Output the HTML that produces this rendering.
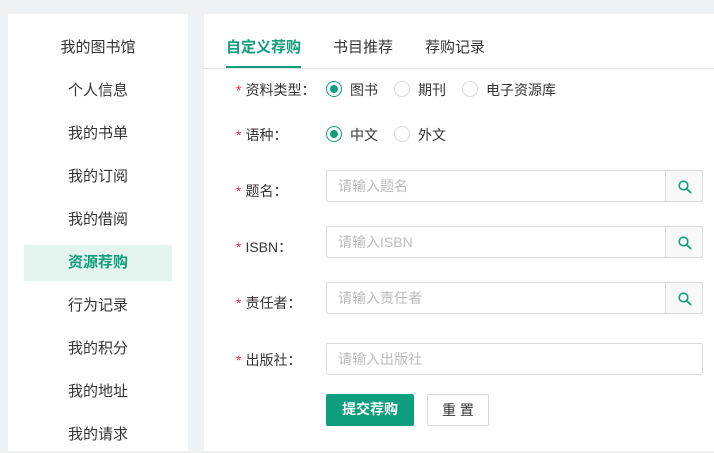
<!DOCTYPE html>
<html><head><meta charset="utf-8"><style>
*{margin:0;padding:0;box-sizing:border-box}
body{width:714px;height:451px;background:#eef1f4;font-family:"Liberation Sans","Noto Sans CJK SC",sans-serif;font-size:14px;color:#333;position:relative;overflow:hidden}
.side{position:absolute;left:8px;top:14px;width:180px;height:437px;background:#fff}
.mi{position:absolute;left:16px;width:148px;height:36px;line-height:36px;text-align:center;font-size:15px;color:#333}
.mi.act{background:#e3f4ef;color:#0f9d7a;font-weight:bold}
.main{position:absolute;left:204px;top:14px;width:510px;height:437px;background:#fff}
.tab{position:absolute;top:22px;font-size:15px;color:#333}
.tab.act{color:#0f9d7a;font-weight:bold}
.line{position:absolute;left:0;top:54px;width:510px;height:1px;background:#e4e4e4}
.ul{position:absolute;left:22px;top:52px;width:75px;height:2px;background:#0f9d7a}
.lbl{position:absolute;left:32px;font-size:14px;color:#333}
.lbl b{color:#e33;font-weight:normal;margin-right:4px}
.radio{position:absolute;width:16px;height:16px;border:1px solid #d9d9d9;border-radius:50%}
.radio.on{border-color:#0f9d7a}
.radio.on:after{content:"";position:absolute;left:3px;top:3px;width:8px;height:8px;border-radius:50%;background:#0f9d7a}
.rt{position:absolute;font-size:14px;color:#333}
.inp{position:absolute;left:122px;width:377px;height:32px;border:1px solid #dcdcdc;border-radius:2px;color:#bbb;font-size:14px;line-height:30px;padding-left:11px}
.sb{position:absolute;right:-1px;top:-1px;width:38px;height:32px;border:1px solid #dcdcdc;background:#f8f8f8;border-radius:0 2px 2px 0}
.sb svg{position:absolute;left:12px;top:9px}
.btn{position:absolute;top:380px;height:32px;line-height:30px;text-align:center;font-size:14px;border-radius:2px}
</style></head><body>
<div class="side">
<div class="mi" style="top:16px">我的图书馆</div>
<div class="mi" style="top:59px">个人信息</div>
<div class="mi" style="top:102px">我的书单</div>
<div class="mi" style="top:145px">我的订阅</div>
<div class="mi" style="top:188px">我的借阅</div>
<div class="mi act" style="top:231px">资源荐购</div>
<div class="mi" style="top:274px">行为记录</div>
<div class="mi" style="top:317px">我的积分</div>
<div class="mi" style="top:360px">我的地址</div>
<div class="mi" style="top:403px">我的请求</div>
</div>
<div class="main">
<div class="tab act" style="left:22px">自定义荐购</div>
<div class="tab" style="left:129px">书目推荐</div>
<div class="tab" style="left:221px">荐购记录</div>
<div class="line"></div><div class="ul"></div>
<div class="lbl" style="top:66px"><b>*</b>资料类型：</div>
<div class="radio on" style="left:122px;top:67px"></div><div class="rt" style="left:146px;top:66px">图书</div>
<div class="radio" style="left:190px;top:67px"></div><div class="rt" style="left:214px;top:66px">期刊</div>
<div class="radio" style="left:258px;top:67px"></div><div class="rt" style="left:282px;top:66px">电子资源库</div>
<div class="lbl" style="top:111px"><b>*</b>语种：</div>
<div class="radio on" style="left:122px;top:112px"></div><div class="rt" style="left:146px;top:111px">中文</div>
<div class="radio" style="left:190px;top:112px"></div><div class="rt" style="left:214px;top:111px">外文</div>
<div class="lbl" style="top:167px"><b>*</b>题名：</div>
<div class="inp" style="top:156px">请输入题名<div class="sb"><svg width="14" height="14" viewBox="0 0 14 14"><circle cx="5.5" cy="5.5" r="4.3" fill="none" stroke="#0f9d7a" stroke-width="1.6"/><path d="M8.6 8.6L12.5 12.5" stroke="#0f9d7a" stroke-width="1.8" stroke-linecap="round"/></svg></div></div>
<div class="lbl" style="top:223px"><b>*</b>ISBN：</div>
<div class="inp" style="top:212px">请输入ISBN<div class="sb"><svg width="14" height="14" viewBox="0 0 14 14"><circle cx="5.5" cy="5.5" r="4.3" fill="none" stroke="#0f9d7a" stroke-width="1.6"/><path d="M8.6 8.6L12.5 12.5" stroke="#0f9d7a" stroke-width="1.8" stroke-linecap="round"/></svg></div></div>
<div class="lbl" style="top:279px"><b>*</b>责任者：</div>
<div class="inp" style="top:268px">请输入责任者<div class="sb"><svg width="14" height="14" viewBox="0 0 14 14"><circle cx="5.5" cy="5.5" r="4.3" fill="none" stroke="#0f9d7a" stroke-width="1.6"/><path d="M8.6 8.6L12.5 12.5" stroke="#0f9d7a" stroke-width="1.8" stroke-linecap="round"/></svg></div></div>
<div class="lbl" style="top:336px"><b>*</b>出版社：</div>
<div class="inp" style="top:329px">请输入出版社</div>
<div class="btn" style="left:122px;width:88px;background:#0d9e7d;color:#fff;font-weight:bold">提交荐购</div>
<div class="btn" style="left:223px;width:62px;border:1px solid #d9d9d9;color:#333">重 置</div>
</div>
</body></html>
